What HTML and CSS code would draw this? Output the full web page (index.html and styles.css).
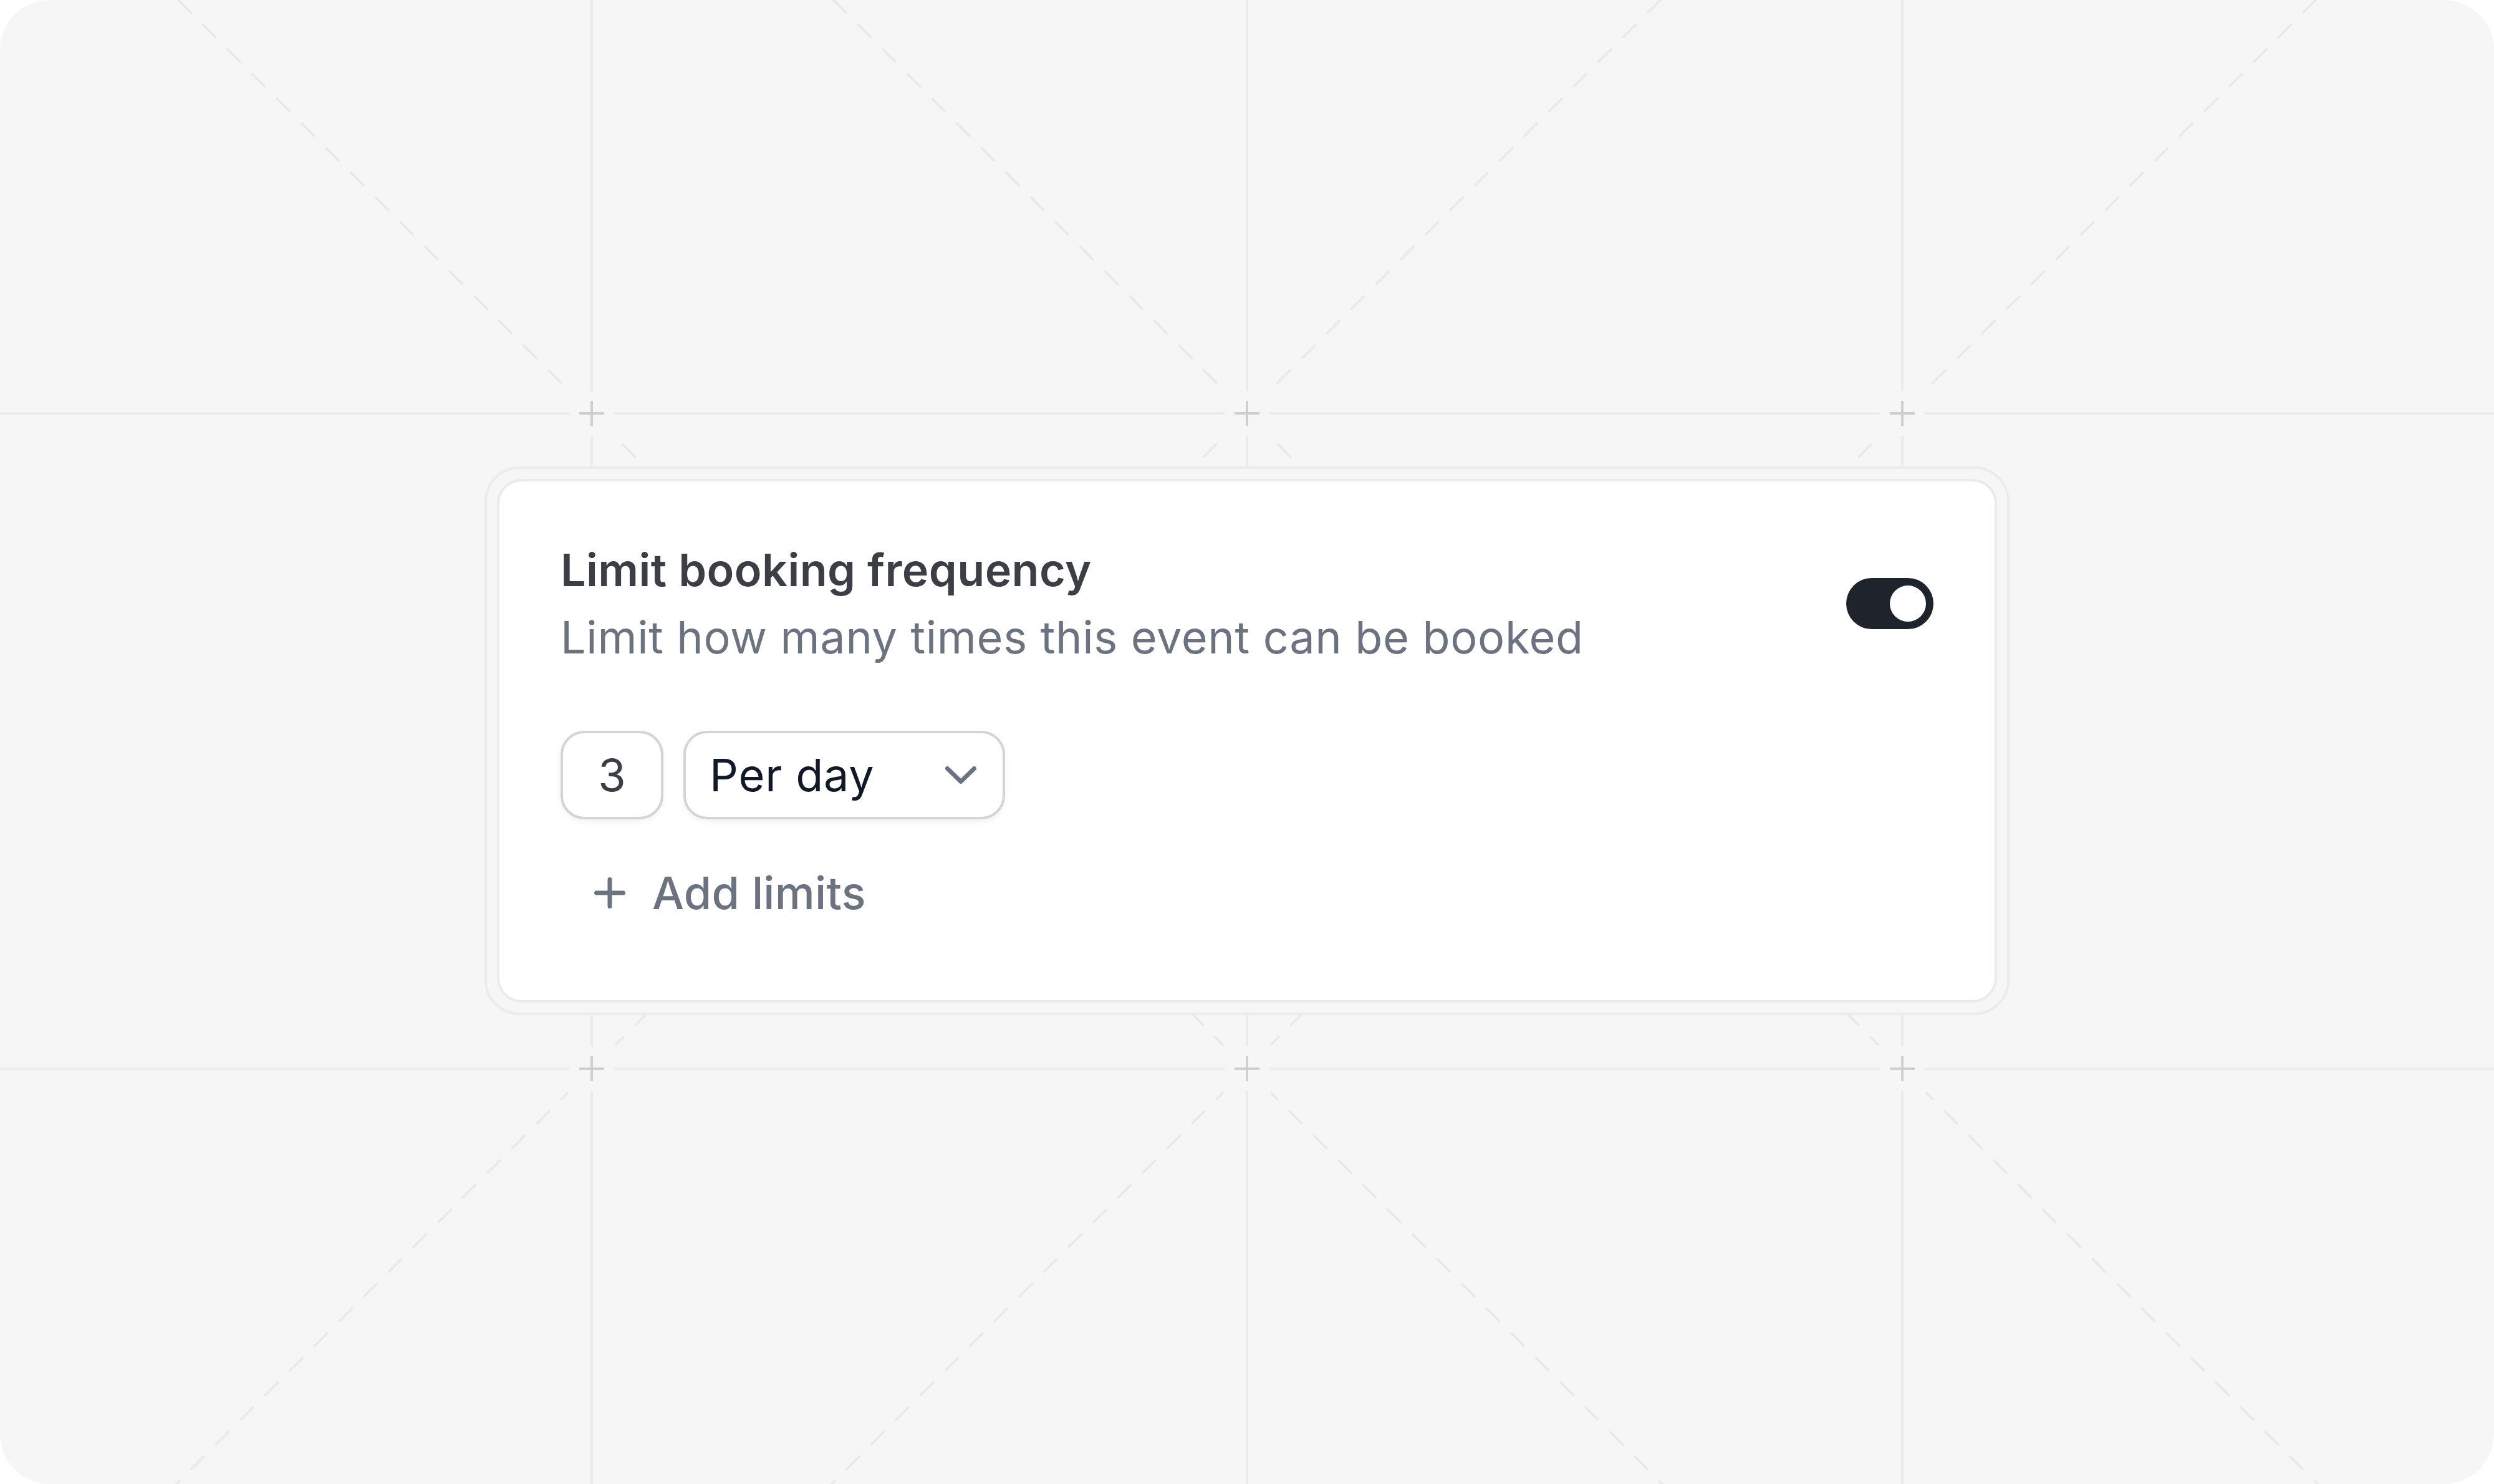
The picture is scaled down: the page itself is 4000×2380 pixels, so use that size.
FILE: index.html
```html
<!DOCTYPE html>
<html lang="en">
<head>
<meta charset="utf-8">
<title>Limit booking frequency</title>
<link rel="stylesheet" href="styles.css">
</head>
<body>
<div class="canvas">
  <svg class="backdrop" width="4000" height="2380" viewBox="0 0 4000 2380" aria-hidden="true">
    <defs>
      <mask id="gridMask" maskUnits="userSpaceOnUse" x="0" y="0" width="4000" height="2380">
        <rect x="0" y="0" width="4000" height="2380" fill="#fff"/>
        <circle cx="949" cy="663" r="36" fill="#000"/>
        <circle cx="2000" cy="663" r="36" fill="#000"/>
        <circle cx="3051" cy="663" r="36" fill="#000"/>
        <circle cx="949" cy="1714" r="36" fill="#000"/>
        <circle cx="2000" cy="1714" r="36" fill="#000"/>
        <circle cx="3051" cy="1714" r="36" fill="#000"/>
      </mask>
      <mask id="diagMask" maskUnits="userSpaceOnUse" x="0" y="0" width="4000" height="2380">
        <rect x="0" y="0" width="4000" height="2380" fill="#fff"/>
        <circle cx="949" cy="663" r="54" fill="#000"/>
        <circle cx="2000" cy="663" r="54" fill="#000"/>
        <circle cx="3051" cy="663" r="54" fill="#000"/>
        <circle cx="949" cy="1714" r="54" fill="#000"/>
        <circle cx="2000" cy="1714" r="54" fill="#000"/>
        <circle cx="3051" cy="1714" r="54" fill="#000"/>
      </mask>
    </defs>
    <g class="grid-lines" mask="url(#gridMask)">
      <line x1="0" y1="663" x2="4000" y2="663"/>
      <line x1="0" y1="1714" x2="4000" y2="1714"/>
      <line x1="949" y1="0" x2="949" y2="2380"/>
      <line x1="2000" y1="0" x2="2000" y2="2380"/>
      <line x1="3051" y1="0" x2="3051" y2="2380"/>
    </g>
    <g class="diag-lines" mask="url(#diagMask)">
      <line x1="286" y1="0" x2="2666" y2="2380"/>
      <line x1="2663" y1="0" x2="283" y2="2380"/>
      <line x1="1337" y1="0" x2="3717" y2="2380"/>
      <line x1="3714" y1="0" x2="1334" y2="2380"/>
    </g>
    <g class="pluses">
      <path d="M929 663h40M949 643v40"/>
      <path d="M1980 663h40M2000 643v40"/>
      <path d="M3031 663h40M3051 643v40"/>
      <path d="M929 1714h40M949 1694v40"/>
      <path d="M1980 1714h40M2000 1694v40"/>
      <path d="M3031 1714h40M3051 1694v40"/>
    </g>
  </svg>

  <div class="frame">
    <section class="card">
      <div class="card-head">
        <div class="head-text">
          <h2 class="title">Limit booking frequency</h2>
          <p class="subtitle">Limit how many times this event can be booked</p>
        </div>
        <div class="toggle" role="switch" aria-checked="true">
          <span class="knob"></span>
        </div>
      </div>

      <div class="limit-row">
        <div class="field number-field">3</div>
        <div class="field select-field">
          <span class="select-value">Per day</span>
          <svg class="chevron" width="50" height="28" viewBox="0 0 50 28" aria-hidden="true">
            <path d="M3.5 3.5 25 24.5 46.5 3.5"/>
          </svg>
        </div>
      </div>

      <div class="add-limits">
        <svg class="plus-icon" width="50" height="50" viewBox="0 0 50 50" aria-hidden="true">
          <path d="M3.5 25h43M25 3.5v43"/>
        </svg>
        <span>Add limits</span>
      </div>
    </section>
  </div>
</div>
</body>
</html>
```

FILE: styles.css
```css
html, body {
  margin: 0;
  padding: 0;
  background: #ffffff;
}

body {
  font-family: "Inter", "Noto Sans", "Liberation Sans", sans-serif;
}

.canvas {
  position: relative;
  width: 4000px;
  height: 2380px;
  background: #f6f6f6;
  border-radius: 80px;
  overflow: hidden;
  display: flex;
  align-items: center;
  justify-content: center;
  padding-bottom: 4px;
  box-sizing: border-box;
}

.backdrop {
  position: absolute;
  left: 0;
  top: 0;
}

.grid-lines line {
  stroke: #ebebeb;
  stroke-width: 4;
}

.diag-lines line {
  stroke: #e9e9e9;
  stroke-width: 4;
  stroke-dasharray: 28 28;
  stroke-linecap: round;
}

.pluses path {
  stroke: #cfcfcf;
  stroke-width: 4;
  fill: none;
}

.frame {
  position: relative;
  width: 2446px;
  box-sizing: border-box;
  padding: 16px;
  border: 4px solid #ebebeb;
  border-radius: 56px;
  background: #f6f6f6;
}

.card {
  background: #ffffff;
  border: 4px solid #ebebeb;
  border-radius: 40px;
  padding: 88px 98px 118px 98px;
  display: flex;
  flex-direction: column;
}

.card-head {
  display: flex;
  align-items: center;
  justify-content: space-between;
}

.head-text {
  display: flex;
  flex-direction: column;
}

.title {
  margin: 0;
  font-size: 72px;
  line-height: 108px;
  font-weight: 600;
  color: #3b3e44;
  letter-spacing: 0.4px;
}

.subtitle {
  margin: 0;
  font-size: 72px;
  line-height: 108px;
  font-weight: 400;
  color: #6b7280;
  letter-spacing: 0.65px;
}

.toggle {
  width: 140px;
  height: 82px;
  box-sizing: border-box;
  padding: 12px;
  border-radius: 41px;
  background: #1f242c;
  display: flex;
  justify-content: flex-end;
  align-items: center;
}

.knob {
  width: 58px;
  height: 58px;
  border-radius: 50%;
  background: #ffffff;
}

.limit-row {
  margin-top: 96px;
  display: flex;
  gap: 32px;
}

.field {
  box-sizing: border-box;
  height: 142px;
  border: 4px solid #d4d4d4;
  border-radius: 38px;
  background: #ffffff;
  box-shadow: 0 4px 10px rgba(0, 0, 0, 0.05);
  font-size: 72px;
  line-height: 108px;
  padding: 13px 0;
}

.number-field {
  width: 165px;
  text-align: center;
  color: #3b3e44;
}

.select-field {
  width: 516px;
  padding-left: 38px;
  padding-right: 42px;
  display: flex;
  align-items: center;
  justify-content: space-between;
  color: #111827;
  letter-spacing: 0.8px;
}

.chevron path {
  fill: none;
  stroke: #6b7280;
  stroke-width: 7;
  stroke-linecap: round;
  stroke-linejoin: round;
}

.add-limits {
  margin-top: 64px;
  margin-left: 54px;
  display: flex;
  align-items: center;
  gap: 43px;
  font-size: 72px;
  line-height: 108px;
  font-weight: 500;
  color: #6b7280;
  letter-spacing: 0.3px;
}

.plus-icon path {
  fill: none;
  stroke: #6b7280;
  stroke-width: 7;
  stroke-linecap: round;
}
```
